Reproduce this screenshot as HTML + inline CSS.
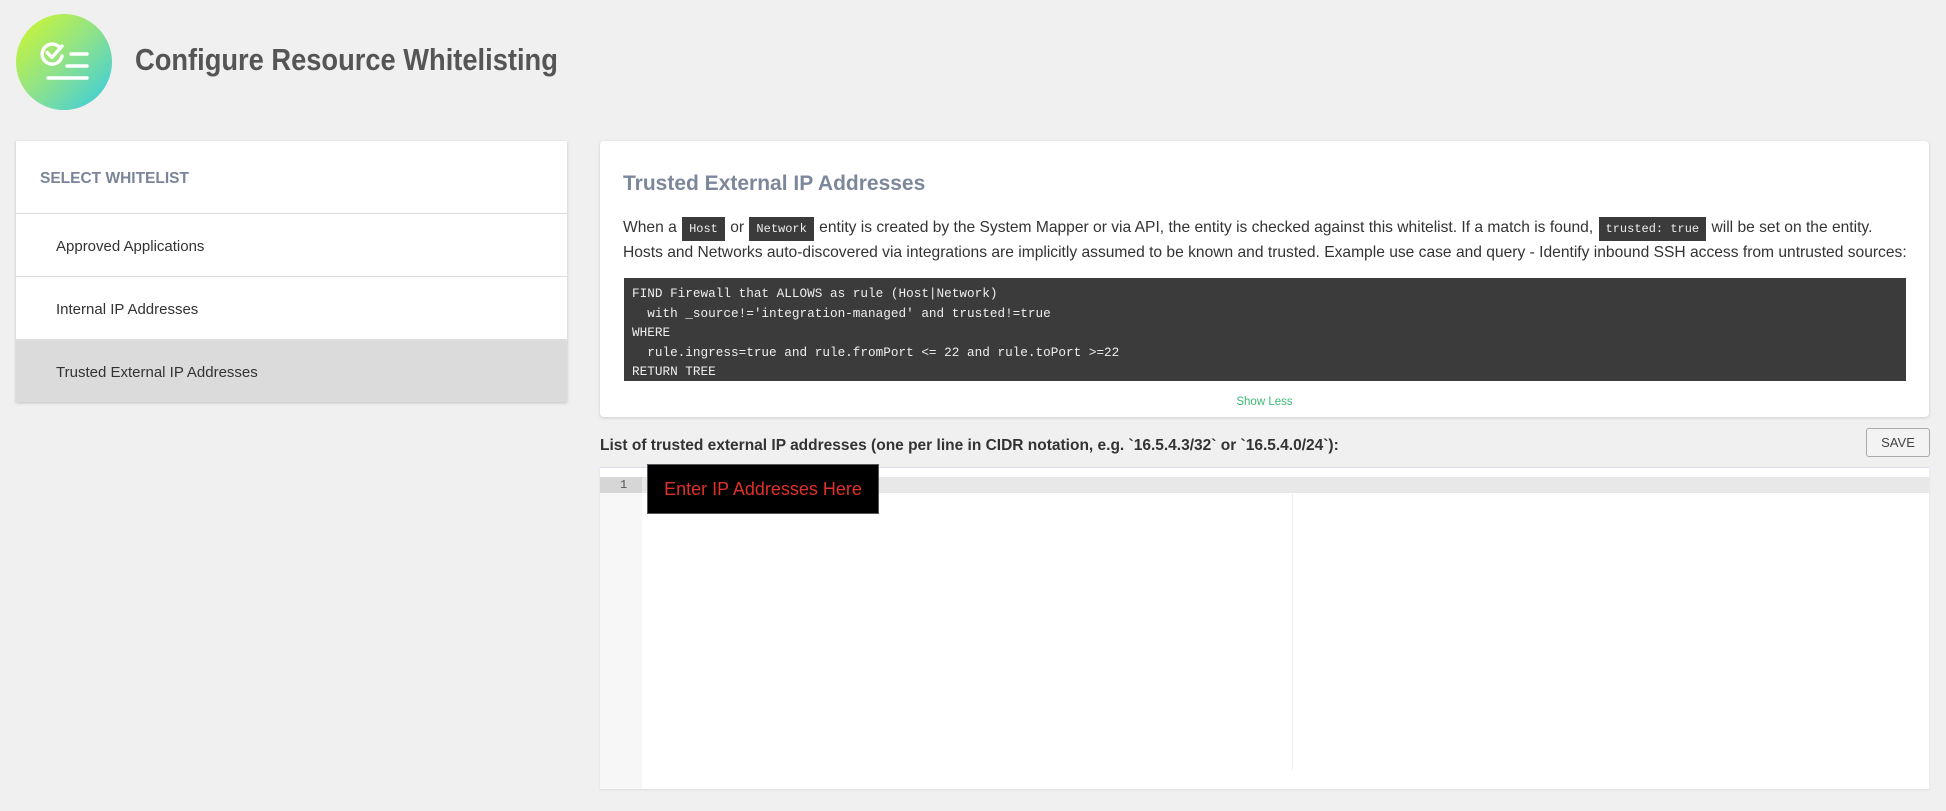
<!DOCTYPE html>
<html><head><meta charset="utf-8"><style>
*{box-sizing:border-box;margin:0;padding:0}
body{width:1946px;height:811px;background:#f0f0f0;font-family:"Liberation Sans",sans-serif;position:relative;overflow:hidden;color:#333}
.abs{position:absolute}
.title{left:135px;top:42px;font-size:31px;color:#555;font-weight:bold;transform:scaleX(0.88);transform-origin:left top}
.lp{left:16px;top:141px;width:551px;height:261px;background:#fff;box-shadow:0 1px 3px rgba(0,0,0,.2)}
.lp .hd{height:73px;border-bottom:1px solid #ddd;padding:29px 0 0 24px;font-size:15.5px;color:#7a8599;font-weight:bold}
.lp .it{height:63px;border-bottom:1px solid #ddd;padding:24px 0 0 40px;font-size:15px;color:#333}
.lp .it.sel{background:#dbdbdb;border-bottom:none;height:62px}
.card{left:600px;top:141px;width:1329px;height:276px;background:#fff;border-radius:4px;box-shadow:0 1px 3px rgba(0,0,0,.15)}
.ct{left:23px;top:31px;font-size:21px;color:#7d879c;font-weight:bold}
.para{left:23px;top:75px;width:1310px;font-size:15.6px;line-height:24px;color:#333;white-space:nowrap}
.tag{background:#3b3b3b;color:#eee;font-family:"Liberation Mono",monospace;font-size:12px;padding:5px 7px;margin:0 1px}
.code{left:24px;top:137px;width:1282px;height:103px;background:#3b3b3b;color:#eee;font-family:"Liberation Mono",monospace;font-size:12.7px;line-height:19.5px;padding:6px 8px;white-space:pre}
.show{left:0;width:1329px;top:255px;text-align:center;font-size:11.5px;color:#3cb878}
.lbl{left:600px;top:437px;font-size:15.5px;font-weight:bold;color:#333}
.save{left:1866px;top:428px;width:64px;height:29px;border:1px solid #aaa;border-radius:3px;background:#f3f3f3;font-size:13px;color:#444;text-align:center;line-height:27px}
</style></head><body>
<svg class="abs" style="left:16px;top:14px" width="97" height="97" viewBox="0 0 97 97">
<defs><linearGradient id="g" x1="0" y1="0" x2="1" y2="1"><stop offset="0" stop-color="#d2f82a"/><stop offset="0.5" stop-color="#8ee28a"/><stop offset="1" stop-color="#33cbe6"/></linearGradient></defs>
<circle cx="48" cy="48" r="48" fill="url(#g)"/>
<g stroke="#fff" stroke-width="3.4" fill="none" stroke-linecap="round" stroke-linejoin="round">
<path d="M42.4 32.3 A10 10 0 1 0 46 42"/>
<path d="M31 38.5 L36 43.5 L46 32"/>
<path d="M55 40 H71"/><path d="M51 52 H71"/><path d="M32 64 H71"/>
</g></svg>
<div class="abs title">Configure Resource Whitelisting</div>
<div class="abs lp">
<div class="hd">SELECT WHITELIST</div>
<div class="it">Approved Applications</div>
<div class="it">Internal IP Addresses</div>
<div class="it sel">Trusted External IP Addresses</div>
</div>
<div class="abs card">
<div class="abs ct">Trusted External IP Addresses</div>
<div class="abs para">When a <span class="tag">Host</span> or <span class="tag">Network</span> entity is created by the System Mapper or via API, the entity is checked against this whitelist. If a match is found, <span class="tag">trusted: true</span> will be set on the entity.<br>Hosts and Networks auto-discovered via integrations are implicitly assumed to be known and trusted. Example use case and query - Identify inbound SSH access from untrusted sources:</div>
<div class="abs code">FIND Firewall that ALLOWS as rule (Host|Network)
  with _source!='integration-managed' and trusted!=true
WHERE
  rule.ingress=true and rule.fromPort &lt;= 22 and rule.toPort &gt;=22
RETURN TREE</div>
<div class="abs show">Show Less</div>
</div>
<div class="abs lbl">List of trusted external IP addresses (one per line in CIDR notation, e.g. `16.5.4.3/32` or `16.5.4.0/24`):</div>
<div class="abs save">SAVE</div>
<div class="abs" style="left:600px;top:467px;width:1329px;height:322px;background:#fff;border-top:1px solid #dde;box-shadow:0 1px 2px rgba(0,0,0,.08)"></div>
<div class="abs" style="left:600px;top:477px;width:42px;height:312px;background:#f7f7f7"></div>
<div class="abs" style="left:600px;top:477px;width:1329px;height:16px;background:#e8e8e8"></div>
<div class="abs" style="left:600px;top:477px;width:42px;height:16px;background:#d6d6d6"></div>
<div class="abs" style="left:620px;top:477px;font-size:12px;line-height:16px;color:#555;font-family:'Liberation Mono',monospace">1</div>
<div class="abs" style="left:1292px;top:493px;width:1px;height:277px;background:#eee"></div>
<div class="abs" style="left:647px;top:464px;width:232px;height:50px;background:#000;border:1px solid #555;color:#e0302a;font-size:18px;text-align:center;line-height:48px">Enter IP Addresses Here</div>
</body></html>
